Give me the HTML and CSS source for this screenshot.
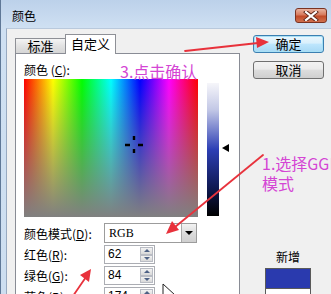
FILE: index.html
```html
<!DOCTYPE html>
<html lang="zh">
<head>
<meta charset="utf-8">
<title>颜色</title>
<link rel="stylesheet" href="styles.css">
</head>
<body>
<div class="window">
  <div class="titlebar">
    <span class="title">颜色</span>
    <span class="close">
      <svg width="16" height="10" viewBox="0 0 16 10"><path d="M3 1 L13 9 M13 1 L3 9" stroke="#5a2418" stroke-width="4" stroke-linecap="square"/><path d="M3 1 L13 9 M13 1 L3 9" stroke="#ffffff" stroke-width="2.2" stroke-linecap="square"/></svg>
    </span>
  </div>
  <div class="frame">
    <div class="dialog">
      <div class="left">
        <div class="tabs">
          <div class="tab">标准</div>
          <div class="tab active">自定义</div>
        </div>
        <div class="panel">
          <div class="label">颜色 (<u>C</u>):</div>
          <div class="picker">
            <div class="spectrum">
              <svg class="cross" width="20" height="20" viewBox="0 0 20 20"><path d="M10 1 V5 M10 14 V18 M1 10 H6 M14 10 H19" stroke="#000" stroke-width="2.4"/></svg>
            </div>
            <div class="lum"></div>
            <div class="pointer"></div>
          </div>
          <div class="row mode-row">
            <span class="rlabel">颜色模式(<u>D</u>):</span>
            <div class="select"><span class="val">RGB</span><span class="drop"><i></i></span></div>
          </div>
          <div class="row">
            <span class="rlabel">红色(<u>R</u>):</span>
            <div class="spin"><span class="num">62</span><span class="arrows"><b class="up"></b><b class="down"></b></span></div>
          </div>
          <div class="row">
            <span class="rlabel">绿色(<u>G</u>):</span>
            <div class="spin"><span class="num">84</span><span class="arrows"><b class="up"></b><b class="down"></b></span></div>
          </div>
          <div class="row">
            <span class="rlabel">蓝色(<u>B</u>):</span>
            <div class="spin"><span class="num">174</span><span class="arrows"><b class="up"></b><b class="down"></b></span></div>
          </div>
        </div>
      </div>
      <div class="right">
        <button class="btn default">确定</button>
        <button class="btn">取消</button>
        <div class="newbox">
          <div class="newlabel">新增</div>
          <div class="sw sw-new"></div>
          <div class="sw sw-cur"></div>
        </div>
      </div>
    </div>
  </div>
</div>

<div class="note note1">3.点击确认</div>
<div class="note note2">1.选择GGB<br>模式</div>

<svg class="marks" width="331" height="294" viewBox="0 0 331 294">
  <g stroke="#e8323c" stroke-width="1.8" fill="none" stroke-linecap="round">
    <line x1="185" y1="51" x2="258" y2="43"/>
    <line x1="263" y1="155" x2="175" y2="227"/>
    <line x1="73" y1="296" x2="86" y2="277"/>
  </g>
  <g fill="#e8323c">
    <polygon points="269,42 256,37 257,48"/>
    <polygon points="166,234 172,221 179,230"/>
    <polygon points="91,269 80,275 89,282"/>
  </g>
  <path d="M163 284 L163 300 L167 296 L170 303 L172 302 L169 295 L175 295 Z" fill="#fff" stroke="#222" stroke-width="1"/>
</svg>
</body>
</html>
```

FILE: styles.css
```css
* { box-sizing: border-box; }

body {
  margin: 0;
  width: 331px;
  height: 294px;
  overflow: hidden;
  position: relative;
  font-family: "Noto Sans CJK SC", "Noto Sans", sans-serif;
  font-size: 12px;
  color: #000;
}

.window {
  width: 331px;
  height: 294px;
  display: flex;
  flex-direction: column;
  border-left: 1px solid #5f7897;
  background: linear-gradient(#bcd1ea, #cfe0f2 28px, #cddef0);
}

.titlebar {
  height: 28px;
  flex: none;
  display: flex;
  justify-content: space-between;
  align-items: flex-start;
  padding: 0 4px 0 11px;
}

.title {
  margin-top: 8px;
  line-height: 16px;
  font-size: 12px;
}

.close {
  margin-top: 8px;
  width: 32px;
  height: 15px;
  border: 1px solid #7a3322;
  border-radius: 3px;
  background: linear-gradient(#e9b3a0, #d77a5d 45%, #c24a28 55%, #d0704e);
  display: flex;
  align-items: center;
  justify-content: center;
}

.close svg { display: block; }

.frame {
  flex: 1;
  min-height: 0;
  display: flex;
  padding-left: 5px;
}

.dialog {
  flex: 1;
  display: flex;
  background: #f0f0f0;
  border-left: 1px solid #98aac1;
  border-top: 1px solid #b9c9dc;
  padding: 5px 0 0 8px;
}

.left {
  width: 225px;
  flex: none;
  display: flex;
  flex-direction: column;
}

.tabs {
  height: 19px;
  display: flex;
  align-items: flex-end;
  position: relative;
  z-index: 1;
}

.tab {
  width: 51px;
  height: 15px;
  border: 1px solid #8e9096;
  border-bottom: none;
  background: linear-gradient(#f4f4f4, #e2e2e2 50%, #d6d6d6);
  font-size: 13px;
  line-height: 14px;
  text-align: center;
}

.tab.active {
  height: 20px;
  margin-bottom: -1px;
  margin-left: -1px;
  background: #fff;
  line-height: 18px;
}

.panel {
  flex: 1;
  background: #fff;
  border: 1px solid #898c95;
  padding: 8px 0 0 8px;
}

.label {
  height: 15px;
  line-height: 15px;
}

u { text-decoration: underline; text-underline-offset: 1px; }

.picker {
  margin-top: 2px;
  display: flex;
  align-items: flex-start;
}

.spectrum {
  position: relative;
  width: 174px;
  height: 138px;
  flex: none;
  background:
    linear-gradient(rgba(128,128,128,0), rgba(128,128,128,1)),
    linear-gradient(to right, #ff0000, #ffff00 16.67%, #00ff00 33.33%, #00ffff 50%, #0000ff 66.67%, #ff00ff 83.33%, #ff0000);
}

.cross {
  position: absolute;
  left: 100px;
  top: 56px;
}

.lum {
  width: 12px;
  height: 133px;
  margin: 4px 0 0 9px;
  flex: none;
  background: linear-gradient(#f6f6fa, #c3c8e6 20%, #2d3fb5 50%, #101a55 78%, #000 100%);
}

.pointer {
  margin: 65px 0 0 3px;
  width: 0;
  height: 0;
  border-top: 4px solid transparent;
  border-bottom: 4px solid transparent;
  border-right: 7px solid #000;
}

.row {
  display: flex;
  align-items: center;
  height: 19px;
  margin-top: 2px;
}

.mode-row {
  margin-top: 6px;
  height: 20px;
  margin-bottom: 2px;
}

.rlabel {
  width: 80px;
  flex: none;
  line-height: 15px;
}

.select {
  width: 93px;
  height: 20px;
  border: 1px solid #9c9c9c;
  background: #fff;
  display: flex;
  align-items: stretch;
}

.select .val {
  flex: 1;
  padding-left: 4px;
  font-family: "Liberation Serif", serif;
  font-size: 12px;
  line-height: 18px;
}

.drop {
  width: 15px;
  border-left: 1px solid #aaa;
  background: linear-gradient(#f3f3f3, #dcdcdc 50%, #cfcfcf);
  display: flex;
  align-items: center;
  justify-content: center;
}

.drop i {
  width: 0;
  height: 0;
  border-left: 4px solid transparent;
  border-right: 4px solid transparent;
  border-top: 4px solid #000;
}

.spin {
  width: 51px;
  height: 19px;
  border: 1px solid #abadb3;
  background: #fff;
  display: flex;
}

.spin .num {
  flex: 1;
  padding-left: 3px;
  font-family: "Liberation Sans", sans-serif;
  font-size: 12px;
  line-height: 17px;
}

.arrows {
  width: 14px;
  display: flex;
  flex-direction: column;
  padding: 1px 1px 1px 0;
}

.arrows b {
  flex: 1;
  display: flex;
  align-items: center;
  justify-content: center;
  background: linear-gradient(#f2f2f2, #d9d9d9);
  border: 1px solid #b9bcc4;
}

.arrows b::after {
  content: "";
  width: 0;
  height: 0;
  border-left: 3px solid transparent;
  border-right: 3px solid transparent;
}

.arrows .up::after { border-bottom: 3px solid #4d6185; }
.arrows .down::after { border-top: 3px solid #4d6185; }

.right {
  margin-left: 13px;
  padding-top: 1px;
  display: flex;
  flex-direction: column;
  align-items: flex-start;
}

.btn {
  width: 71px;
  height: 19px;
  padding: 0;
  border: 1px solid #707070;
  border-radius: 3px;
  background: linear-gradient(#f3f3f3, #ebebeb 45%, #dddddd 50%, #cfcfcf);
  font-family: "Noto Sans CJK SC", sans-serif;
  font-size: 13px;
  line-height: 16px;
  color: #000;
}

.btn.default {
  border-color: #3c7fb1;
  box-shadow: inset 0 0 0 1px #a8e0f5;
  background: linear-gradient(#eaf6fd, #d9f0fc 45%, #bee6fd 50%, #a7d9f5);
}

.btn + .btn { margin-top: 8px; }

.newbox {
  margin: 170px 0 0 12px;
  width: 46px;
  display: flex;
  flex-direction: column;
  align-items: center;
}

.newlabel {
  line-height: 15px;
  font-size: 12px;
}

.sw {
  width: 46px;
  border: 1px solid #5a5a5a;
}

.sw-new {
  margin-top: 4px;
  height: 21px;
  background: #2a3aae;
}

.sw-cur {
  height: 20px;
  border-top: none;
  background: #fff;
}

.note {
  position: absolute;
  color: #d445d4;
  font-size: 16px;
  line-height: 20px;
  white-space: nowrap;
}

.note1 { left: 120px; top: 61px; }
.note2 { left: 262px; top: 153px; }

.marks {
  position: absolute;
  left: 0;
  top: 0;
  pointer-events: none;
}
```
